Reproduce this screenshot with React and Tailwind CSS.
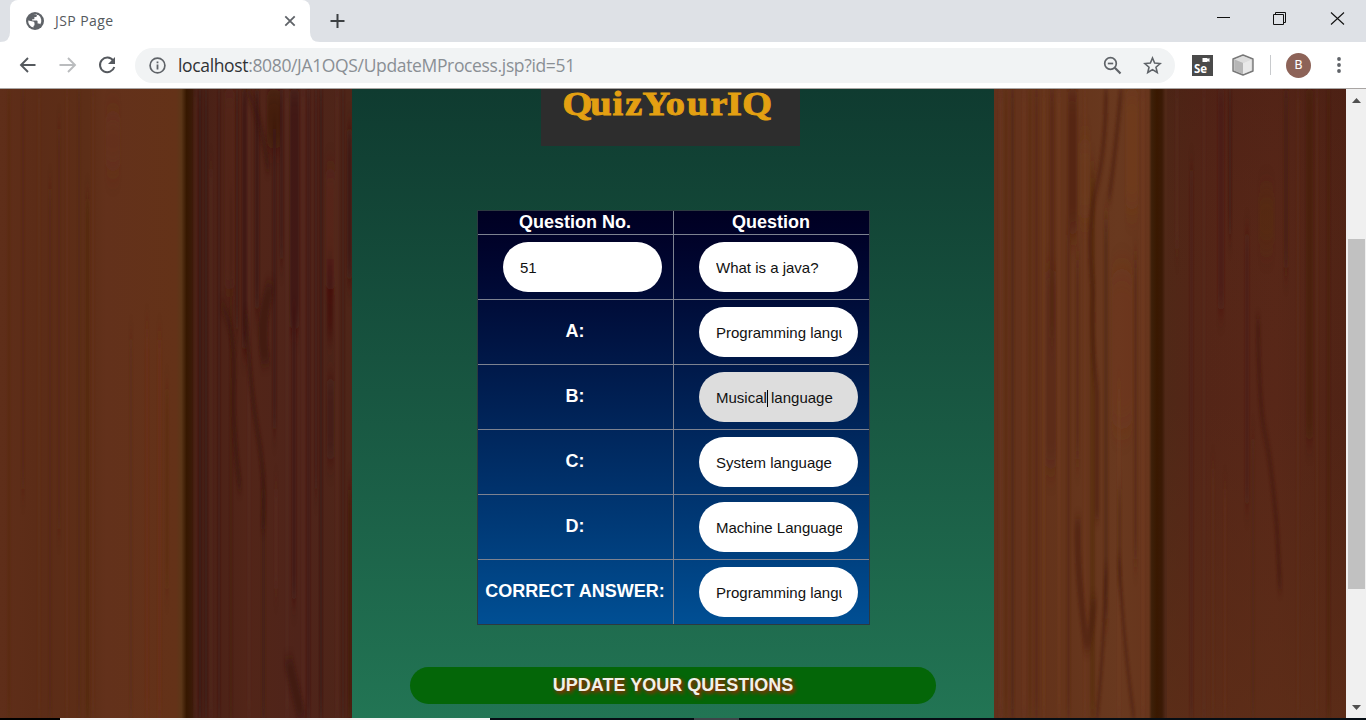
import React from "react";

const leftGrain = [
  // x, y, height, width, colour, opacity
  [8, 0, 629, 2, "#4f2410", 0.4], [22, 0, 400, 2, "#4f2410", 0.5], [38, 0, 629, 2, "#6b3a1e", 0.3],
  [49, 100, 529, 2, "#4f2410", 0.5], [58, 40, 400, 2, "#4f2410", 0.5], [66, 0, 629, 2, "#6b3a1e", 0.35],
  [78, 0, 629, 2, "#4f2410", 0.45], [86, 110, 519, 3, "#4c1f0c", 0.45], [92, 0, 629, 2, "#68361c", 0.4],
  [106, 22, 60, 14, "#672d1a", 0.25], [130, 250, 379, 2, "#4f2410", 0.35], [146, 240, 389, 2, "#712f18", 0.5],
  [158, 250, 379, 3, "#712f18", 0.4], [166, 300, 200, 2, "#4f2410", 0.4],
  [194, 0, 629, 2, "#5c3325", 0.5], [199, 0, 629, 2, "#2e130b", 0.7], [205, 0, 629, 2, "#2e160d", 0.5],
  [210, 80, 549, 2, "#5c3222", 0.4], [218, 0, 629, 2, "#3a120b", 0.6], [225, 0, 200, 9, "#5a251b", 0.4],
  [236, 0, 240, 2, "#36120d", 0.6], [242, 0, 260, 5, "#3a120b", 0.65], [255, 0, 220, 4, "#36100c", 0.6],
  [267, 0, 60, 14, "#35120c", 0.5], [273, 40, 300, 3, "#37130f", 0.6], [280, 0, 170, 3, "#37130f", 0.6],
  [290, 0, 240, 9, "#3a1511", 0.65], [292, 220, 290, 4, "#3c1313", 0.6], [302, 0, 629, 2, "#5c3223", 0.5],
  [307, 0, 629, 3, "#3d1610", 0.6], [315, 0, 400, 2, "#3a120d", 0.6], [320, 0, 629, 2, "#351511", 0.7],
  [326, 80, 120, 9, "#5e2018", 0.4], [327, 170, 80, 6, "#3a0e0b", 0.45], [327, 290, 80, 7, "#3c1318", 0.5],
  [336, 0, 629, 2, "#5b3323", 0.5], [342, 0, 629, 2, "#3a150f", 0.5], [347, 40, 150, 5, "#35120e", 0.6],
  [348, 400, 229, 3, "#3a0e0a", 0.6], [262, 400, 229, 3, "#401a12", 0.6], [275, 400, 100, 2, "#603626", 0.4],
  [248, 0, 629, 2, "#5e3526", 0.35], [286, 0, 629, 2, "#5e3526", 0.35], [230, 100, 529, 2, "#3c170f", 0.4],
];

const rightGrain = [
  [5, 0, 629, 3, "#6b3720", 0.5], [17, 0, 629, 3, "#4d230f", 0.6], [29, 0, 629, 2, "#74401f", 0.45],
  [41, 0, 629, 3, "#552912", 0.6], [49, 0, 629, 2, "#774222", 0.35], [56, 0, 250, 4, "#54240f", 0.7],
  [52, 180, 200, 10, "#522415", 0.45], [64, 0, 629, 2, "#774221", 0.5], [74, 0, 145, 9, "#52210f", 0.75],
  [73, 145, 484, 3, "#532713", 0.6], [86, 50, 80, 10, "#704017", 0.35], [82, 170, 200, 3, "#542812", 0.6],
  [96, 80, 549, 5, "#4d240f", 0.4], [110, 130, 400, 4, "#4f2412", 0.6], [118, 180, 160, 20, "#74371b", 0.35],
  [124, 300, 329, 2, "#794420", 0.4], [132, 0, 120, 12, "#77421b", 0.4], [140, 170, 300, 3, "#522410", 0.6],
  [148, 0, 629, 2, "#7a4120", 0.4], [124, 400, 100, 3, "#4e230f", 0.5],
  [11, 0, 629, 2, "#52260f", 0.4], [35, 0, 629, 2, "#52260f", 0.4], [90, 0, 629, 2, "#774221", 0.3],
  [182, 0, 160, 2, "#603020", 0.4], [196, 80, 549, 3, "#451810", 0.45], [209, 0, 629, 2, "#5b2f20", 0.4],
  [224, 0, 220, 6, "#481b19", 0.5], [235, 0, 145, 2, "#351713", 0.6], [251, 145, 270, 4, "#451b11", 0.45],
  [265, 100, 60, 15, "#58300f", 0.2], [290, 0, 180, 4, "#421a0c", 0.6], [303, 0, 629, 2, "#613222", 0.35],
  [312, 0, 350, 7, "#421a0b", 0.4], [322, 0, 629, 2, "#5e2c1e", 0.4], [333, 0, 629, 3, "#46190f", 0.4],
  [230, 400, 229, 2, "#6c3719", 0.35], [258, 350, 279, 2, "#482114", 0.4], [218, 380, 249, 2, "#643719", 0.35],
];

function Grain({ lines }) {
  return lines.map(([x, y, h, w, fill, opacity], i) => (
    <rect key={i} x={x} y={y} width={w} height={h} rx={w / 2} fill={fill} opacity={opacity} />
  ));
}

function WoodLeft() {
  return (
    <svg className="block h-full w-[352px] shrink-0" viewBox="0 0 352 629" preserveAspectRatio="none">
      <defs>
        <linearGradient id="woodL">
          <stop offset="0" stopColor="#5f2e19" />
          <stop offset="0.1" stopColor="#5c2c17" />
          <stop offset="0.25" stopColor="#5d2e17" />
          <stop offset="0.3" stopColor="#63311b" />
          <stop offset="0.5" stopColor="#643218" />
          <stop offset="0.515" stopColor="#5c3618" />
          <stop offset="0.53" stopColor="#361700" />
          <stop offset="0.545" stopColor="#3b1a08" />
          <stop offset="0.56" stopColor="#482016" />
          <stop offset="0.7" stopColor="#522518" />
          <stop offset="0.85" stopColor="#4f241a" />
          <stop offset="1" stopColor="#4e2518" />
        </linearGradient>
        <filter id="soft" x="-5%" y="-5%" width="110%" height="110%"><feGaussianBlur stdDeviation="0.9 12" /></filter>
        <filter id="soft1" x="-20%" y="-5%" width="140%" height="110%"><feGaussianBlur stdDeviation="1.2 6" /></filter>
      </defs>
      <rect width="352" height="629" fill="url(#woodL)" />
      <g filter="url(#soft)"><Grain lines={leftGrain} /></g>
      <g filter="url(#soft1)" fill="none" stroke="#3a120c" strokeWidth="4" opacity="0.6">
        <path d="M246 225 Q250 300 258 345 T263 440" />
        <path d="M271 195 Q258 235 266 275" strokeWidth="9" />
        <path d="M221 215 Q236 240 234 290 T240 400" strokeWidth="4" />
        <path d="M288 570 L302 629" strokeWidth="9" />
        <path d="M247 0 Q262 30 268 80" />
      </g>
    </svg>
  );
}

function WoodRight() {
  return (
    <svg className="block h-full w-[352px] shrink-0" viewBox="0 0 352 629" preserveAspectRatio="none">
      <defs>
        <linearGradient id="woodR">
          <stop offset="0" stopColor="#62311b" />
          <stop offset="0.2" stopColor="#65341b" />
          <stop offset="0.35" stopColor="#69391f" />
          <stop offset="0.44" stopColor="#67351c" />
          <stop offset="0.448" stopColor="#3d2009" />
          <stop offset="0.463" stopColor="#391800" />
          <stop offset="0.477" stopColor="#3b1a06" />
          <stop offset="0.487" stopColor="#502817" />
          <stop offset="0.6" stopColor="#542517" />
          <stop offset="0.8" stopColor="#582718" />
          <stop offset="1" stopColor="#502315" />
        </linearGradient>
        <linearGradient id="woodRV" x1="0" y1="0" x2="0" y2="1">
          <stop offset="0" stopColor="#3d1610" stopOpacity="0.2" />
          <stop offset="0.5" stopColor="#5d2f17" stopOpacity="0" />
          <stop offset="1" stopColor="#5f2f18" stopOpacity="0.7" />
        </linearGradient>
      </defs>
      <rect width="352" height="629" fill="url(#woodR)" />
      <rect x="173" width="179" height="629" fill="url(#woodRV)" />
      <g filter="url(#soft)"><Grain lines={rightGrain} /></g>
      <g filter="url(#soft1)" fill="none" stroke="#4a1c0e" strokeWidth="4" opacity="0.55">
        <path d="M112 0 Q112 60 102 100 T99 200 Q97 260 103 300 V430" />
        <path d="M127 0 Q122 60 115 110" />
        <path d="M264 230 Q265 320 271 345 T283 440 L286 500" stroke="#421710" />
        <path d="M84 430 Q82 480 93 560 Q98 540 100 510" strokeWidth="6" />
        <path d="M125 470 Q130 560 140 629" strokeWidth="3" />
        <path d="M112 480 Q110 560 103 629" strokeWidth="3" />
      </g>
    </svg>
  );
}

function Tabs() {
  return (
    <div className="flex h-[42px] items-stretch bg-[#dee1e6]">
      <svg className="h-[42px] w-[10px]" viewBox="0 0 10 42"><path d="M0 42 Q10 42 10 32 V42 Z" fill="#fff" /></svg>
      <div className="flex w-[300px] items-center rounded-t-lg bg-white pl-4 pr-[13px]">
        <svg width="18" height="18" viewBox="0 0 18 18">
          <circle cx="9" cy="9" r="9" fill="#5f6368" />
          <path d="M2.2 8.4 7 9.6c1.2.3 1.6 1 1.5 2v1.6l-1 .7v1.7A6.9 6.9 0 0 1 2.2 8.4Z" fill="#fff" />
          <path d="M7.4 2.3h3.4v1.5c0 .8-.5 1.2-1.2 1.3H8.4v1.3c0 .6-.4.9-1 .9H6.200v1.200h4.200c.8 0 1.200.5 1.200 1.200v1.800h1.300c.7 0 1.100.4 1.300 1A6.800 6.800 0 0 0 12.300 3.100" fill="#fff" />
        </svg>
        <span className="ml-[11px] flex-1 whitespace-nowrap font-['Open_Sans',sans-serif] text-[14px] leading-4 tracking-[0.42px] text-[#55595d]">JSP Page</span>
        <svg width="14" height="14" viewBox="0 0 14 14"><path d="M2.300 2.300 11.700 11.700M11.700 2.300 2.300 11.700" stroke="#5f6368" strokeWidth="1.800" /></svg>
      </div>
      <svg className="h-[42px] w-[10px]" viewBox="0 0 10 42"><path d="M10 42 Q0 42 0 32 V42 Z" fill="#fff" /></svg>
      <svg className="ml-[9px] mt-[13px]" width="16" height="16" viewBox="0 0 16 16"><path d="M8.500 1v14M1.500 8h14" stroke="#3c4043" strokeWidth="2" /></svg>
      <div className="flex flex-1 justify-end">
        <svg className="mt-[10px]" width="134" height="18" viewBox="0 0 134 18" fill="none" stroke="#111" strokeWidth="1">
          <path d="M1 7.500H14" />
          <path d="M57.500 4.500h10v10h-10zM59.500 4.500v-2h10v10h-2" />
          <path d="M115 2.500 128 14.500M128 2.500 115 14.500" strokeWidth="1.100" />
        </svg>
        <div className="w-[16px]" />
      </div>
    </div>
  );
}

function Toolbar() {
  return (
    <div className="flex h-[46px] items-center bg-white pl-[19px] pr-[20px]">
      <div className="flex w-[116px] items-center">
        <svg className="mr-[22px]" width="18" height="18" viewBox="0 0 18 18" fill="none" stroke="#55595e" strokeWidth="1.900"><path d="M16.500 9H2.200M9 2 2 9l7 7" /></svg>
        <svg className="mr-[20px]" width="18" height="18" viewBox="0 0 18 18" fill="none" stroke="#babcbe" strokeWidth="1.900"><path d="M.5 9h14.800M9 2l7 7-7 7" /></svg>
        <svg width="20" height="20" viewBox="0 0 20 20"><path d="M16.200 5.600A7.300 7.300 0 1 0 17.300 12" fill="none" stroke="#55595e" strokeWidth="2" /><path d="M18 2v7h-7z" fill="#55595e" /></svg>
      </div>
      <div className="flex h-[35px] w-[1040px] items-center rounded-full bg-[#f1f3f4] pl-[14px] pr-[13px]">
        <svg width="17" height="17" viewBox="0 0 17 17"><circle cx="8.500" cy="8.500" r="7.400" fill="none" stroke="#5f6368" strokeWidth="1.700" /><path d="M8.500 7.600v4.900M8.500 4.500v1.800" stroke="#5f6368" strokeWidth="1.800" /></svg>
        <span className="ml-[12px] flex-1 whitespace-nowrap font-['Open_Sans',sans-serif] text-[17.5px] leading-6 tracking-[-0.35px] text-[#8a8f94]"><span className="text-[#303235]">localhost</span>:8080/JA1OQS/UpdateMProcess.jsp?id=51</span>
        <svg className="mr-[21px]" width="19" height="19" viewBox="0 0 19 19" fill="none" stroke="#5f6368" strokeWidth="1.700"><circle cx="7.500" cy="7.500" r="5.800" /><path d="m11.800 11.800 5.700 5.700" strokeWidth="2.200" /><path d="M4.800 7.500h5.400" /></svg>
        <svg width="19" height="19" viewBox="0 0 24 24" fill="none" stroke="#5f6368" strokeWidth="2"><path d="m12 2.500 2.700 6.400 7 .6-5.300 4.600 1.600 6.800-6-3.600-6 3.600 1.600-6.800L2.300 9.500l7-.6z" /></svg>
      </div>
      <div className="ml-[17px] flex h-[21px] w-[21px] items-end bg-[#4a4a4a]">
        <svg width="21" height="21" viewBox="0 0 21 21"><path d="M10.500 3h5v1l2-1v4l-2-1v1h-5z" fill="#fff" /><text x="2" y="18" fill="#fff" fontFamily="Open Sans, sans-serif" fontSize="11.5" fontWeight="700">Se</text></svg>
      </div>
      <svg className="ml-[19px]" width="22" height="22" viewBox="0 0 22 22" stroke="#777" strokeLinejoin="round"><path d="m11 1 10 4v12l-10 4-10-4V5z" fill="#cfcfcf" strokeWidth="1.400" /><path d="m11 2 8.500 3.500L11 9 2.500 5.500z" fill="#ddd" stroke="none" /><path d="M11 9v11l-8.500-3.500v-11z" fill="#b6b6b6" stroke="none" /><path d="M11 9v11l8.500-3.500v-11z" fill="#e9e9e9" stroke="none" /></svg>
      <div className="ml-[16px] h-5 w-px bg-[#c8cacd]" />
      <div className="ml-[15px] flex h-[25px] w-[25px] items-center justify-center rounded-full bg-[#8d6358] font-['Roboto',sans-serif] text-[13px] text-white">B</div>
      <svg className="ml-auto mr-[5px]" width="4" height="16" viewBox="0 0 4 16" fill="#5f6368"><circle cx="2" cy="2" r="1.900" /><circle cx="2" cy="8" r="1.900" /><circle cx="2" cy="14" r="1.900" /></svg>
    </div>
  );
}

function Pill({ value, focused, caretAfter }) {
  return (
    <div className={`ml-[25px] flex h-[50px] w-[159px] items-center rounded-[25px] pl-[17.5px] pr-[16px] pt-[2px] text-[15px] leading-[18px] text-[#111] ${focused ? "bg-[#dddddd]" : "bg-white"}`}>
      <div className="w-full overflow-hidden whitespace-pre">
        {caretAfter ? (
          <>
            {caretAfter}
            <span className="-mr-px inline-block h-[17px] w-px bg-black align-middle" />
            {value.slice(caretAfter.length)}
          </>
        ) : value}
      </div>
    </div>
  );
}

const rows = [
  { label: "A:", value: "Programming language" },
  { label: "B:", value: "Musical language", focused: true, caretAfter: "Musical" },
  { label: "C:", value: "System language" },
  { label: "D:", value: "Machine Language" },
  { label: "CORRECT ANSWER:", value: "Programming language" },
];

function QuestionTable() {
  return (
    <div className="mx-auto mt-[64px] h-[415px] w-[393px] border border-[#2c3a40] bg-linear-to-b from-[#000022] to-[#004f94] text-[18px] font-bold text-white">
      <div className="flex h-6 border-b border-[#7d8290] text-center leading-[22px]">
        <div className="w-[196px] border-r border-[#7d8290]">Question No.</div>
        <div className="w-[195px]">Question</div>
      </div>
      <div className="flex h-[65px] border-b border-[#7d8290] font-normal">
        <div className="flex w-[196px] items-center border-r border-[#7d8290]"><Pill value="51" /></div>
        <div className="flex w-[195px] items-center"><Pill value="What is a java?" /></div>
      </div>
      {rows.map((row) => (
        <div key={row.label} className="flex h-[65px] border-b border-[#7d8290] last:h-[64px] last:border-b-0">
          <div className="flex w-[196px] items-center justify-center whitespace-nowrap border-r border-[#7d8290] pb-[2px]">{row.label}</div>
          <div className="flex w-[195px] items-center font-normal"><Pill {...row} /></div>
        </div>
      ))}
    </div>
  );
}

export default function App() {
  return (
    <div className="flex h-[720px] w-[1366px] flex-col overflow-hidden bg-white font-['Liberation_Sans',Arial,sans-serif]">
      <Tabs />
      <Toolbar />
      <div className="h-px shrink-0 bg-[#a9a5a3]" />
      <div className="flex h-[629px] shrink-0">
        <WoodLeft />
        <main className="w-[642px] bg-linear-to-b from-[#0f3b30] to-[#227554]">
          <div className="ml-[189px] h-[57px] w-[259px] bg-[#2d2d2d]">
            <svg className="block overflow-visible" width="259" height="57" viewBox="0 0 259 57">
              <text transform="scale(1.16 1)" x="18.6 42.4 61.6 72.6 87.6 107.500 125.8 146.2 160.4 173.4" y="26" fill="#e3a012" stroke="#e3a012" strokeWidth="0.9" fontFamily="Liberation Serif, serif" fontWeight="700" fontSize="33">QuizYourIQ</text>
            </svg>
          </div>
          <QuestionTable />
          <button className="ml-[58px] mt-[42px] flex h-[37px] w-[526px] items-center justify-center rounded-full bg-[#046608] pb-px text-[18px] font-bold text-[#f1f1e9] [text-shadow:2px_2px_4px_#d01000]">UPDATE YOUR QUESTIONS</button>
        </main>
        <WoodRight />
        <div className="flex w-5 flex-col items-center bg-[#f0f0f0]">
          <svg className="mt-[9px]" width="9" height="5" viewBox="0 0 9 5"><path d="M0 5 4.500 0 9 5z" fill="#505050" /></svg>
          <div className="mt-[136px] h-[350px] w-[17px] bg-[#c1c1c1]" />
          <svg className="mt-[116px]" width="9" height="5" viewBox="0 0 9 5"><path d="M0 0 4.500 5 9 0z" fill="#505050" /></svg>
        </div>
      </div>
      <div className="flex h-[2px] shrink-0 bg-[#050d14]">
        <div className="w-[60px] bg-black" />
        <div className="w-[430px] bg-[#f4f4f4]" />
        <div className="ml-[204px] w-[45px] bg-[#3c4448]" />
      </div>
    </div>
  );
}
